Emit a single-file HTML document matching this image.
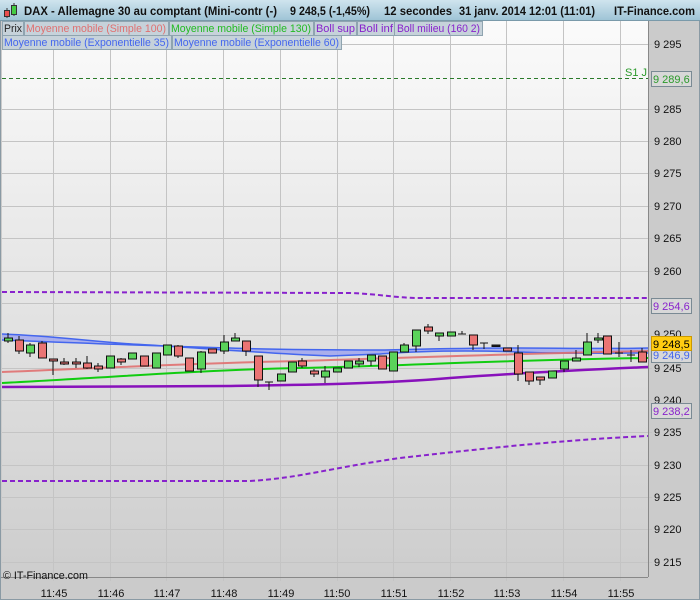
<!DOCTYPE html><html><head><style>body{margin:0;width:700px;height:600px;overflow:hidden;font-family:"Liberation Sans",sans-serif}</style></head><body>
<svg width="700" height="600" xmlns="http://www.w3.org/2000/svg" font-family="Liberation Sans, sans-serif">
<defs>
<linearGradient id="bg" x1="0" y1="0" x2="0" y2="1"><stop offset="0" stop-color="#fbfbfb"/><stop offset="1" stop-color="#cdcdcd"/></linearGradient>
<linearGradient id="hd" x1="0" y1="0" x2="0" y2="1"><stop offset="0" stop-color="#cfe4ee"/><stop offset="1" stop-color="#9fc4d6"/></linearGradient>
</defs>
<rect width="700" height="600" fill="#cbcbcb"/>
<rect x="2" y="20" width="646" height="557" fill="url(#bg)"/>
<g stroke="#c4c4c4" stroke-width="1">
<line x1="53.5" y1="20" x2="53.5" y2="581"/><line x1="110.5" y1="20" x2="110.5" y2="581"/><line x1="166.5" y1="20" x2="166.5" y2="581"/><line x1="223.5" y1="20" x2="223.5" y2="581"/><line x1="280.5" y1="20" x2="280.5" y2="581"/><line x1="337.5" y1="20" x2="337.5" y2="581"/><line x1="393.5" y1="20" x2="393.5" y2="581"/><line x1="450.5" y1="20" x2="450.5" y2="581"/><line x1="506.5" y1="20" x2="506.5" y2="581"/><line x1="563.5" y1="20" x2="563.5" y2="581"/><line x1="620.5" y1="20" x2="620.5" y2="581"/>
<line x1="2" y1="44.5" x2="652" y2="44.5"/><line x1="2" y1="109.5" x2="652" y2="109.5"/><line x1="2" y1="141.5" x2="652" y2="141.5"/><line x1="2" y1="173.5" x2="652" y2="173.5"/><line x1="2" y1="206.5" x2="652" y2="206.5"/><line x1="2" y1="238.5" x2="652" y2="238.5"/><line x1="2" y1="271.5" x2="652" y2="271.5"/><line x1="2" y1="303.5" x2="652" y2="303.5"/><line x1="2" y1="335.5" x2="652" y2="335.5"/><line x1="2" y1="368.5" x2="652" y2="368.5"/><line x1="2" y1="400.5" x2="652" y2="400.5"/><line x1="2" y1="432.5" x2="652" y2="432.5"/><line x1="2" y1="465.5" x2="652" y2="465.5"/><line x1="2" y1="497.5" x2="652" y2="497.5"/><line x1="2" y1="529.5" x2="652" y2="529.5"/><line x1="2" y1="562.5" x2="652" y2="562.5"/>
</g>
<line x1="2" y1="78.5" x2="648" y2="78.5" stroke="#2a7a2a" stroke-dasharray="4,3"/>
<text x="625" y="76" font-size="11" fill="#2a9a2a">S1 J</text>
<path d="M2,334 C60,336 100,343 150,345 C200,348 260,353 330,356 L380,354 C420,351 460,350 520,352 C560,354 600,353 648,353 L648,348 C600,349 560,348 520,348 C470,348 430,349 380,350 C330,350 280,350 230,348 C150,346 80,343 2,340 Z" fill="#a0a6ee" opacity="0.85"/>
<path d="M2,334 C60,336 100,343 150,345 C200,348 260,353 330,356 L380,354 C420,351 460,350 520,352 C560,354 600,353 648,353" fill="none" stroke="#4466ee" stroke-width="1.5"/>
<path d="M2,340 C80,343 150,346 230,348 C280,350 330,350 380,350 C430,349 470,348 520,348 C560,348 600,349 648,348" fill="none" stroke="#4466ee" stroke-width="1.5"/>
<path d="M2,372 C100,368 200,363 300,361 C400,358 500,354 648,351" fill="none" stroke="#e07070" stroke-width="2" opacity="0.9"/>
<path d="M2,383 C100,378 200,370 300,368 C400,366 500,360 648,358" fill="none" stroke="#11cc11" stroke-width="2"/>
<path d="M2,387 L230,386 C300,385 380,384 450,378 C520,373 580,370 648,367" fill="none" stroke="#8811bb" stroke-width="2.5"/>
<path d="M2,292 L350,293 C380,294 395,298 420,298 L648,298" fill="none" stroke="#8822cc" stroke-width="2" stroke-dasharray="5,3"/>
<path d="M2,481 L250,481 C300,478 330,468 400,458 C480,449 560,440 648,436" fill="none" stroke="#8822cc" stroke-width="2" stroke-dasharray="5,3"/>
<g stroke="#111" stroke-width="1">
<line x1="8" y1="333" x2="8" y2="343"/><rect x="4.5" y="338" width="8" height="3" fill="#5ad35a"/>
<line x1="19" y1="336" x2="19" y2="354"/><rect x="15.5" y="340" width="8" height="11" fill="#ea7474"/>
<line x1="30" y1="343" x2="30" y2="357"/><rect x="26.5" y="345" width="8" height="8" fill="#5ad35a"/>
<line x1="42" y1="341" x2="42" y2="358"/><rect x="38.5" y="343" width="8" height="15" fill="#ea7474"/>
<line x1="53" y1="359" x2="53" y2="375"/><rect x="49.5" y="359" width="8" height="2" fill="#ea7474"/>
<line x1="64" y1="358" x2="64" y2="365"/><rect x="60.5" y="362" width="8" height="2" fill="#ea7474"/>
<line x1="76" y1="358" x2="76" y2="368"/><rect x="72.5" y="362" width="8" height="2" fill="#ea7474"/>
<line x1="87" y1="356" x2="87" y2="369"/><rect x="83.5" y="363" width="8" height="5" fill="#ea7474"/>
<line x1="98" y1="363" x2="98" y2="372"/><rect x="94.5" y="366" width="8" height="3" fill="#ea7474"/>
<rect x="106.5" y="356" width="8" height="12" fill="#5ad35a"/>
<line x1="121" y1="358" x2="121" y2="365"/><rect x="117.5" y="359" width="8" height="3" fill="#ea7474"/>
<rect x="128.5" y="353" width="8" height="6" fill="#5ad35a"/>
<rect x="140.5" y="356" width="8" height="10" fill="#ea7474"/>
<rect x="152.5" y="353" width="8" height="15" fill="#5ad35a"/>
<rect x="163.5" y="345" width="8" height="10" fill="#5ad35a"/>
<line x1="178" y1="345" x2="178" y2="358"/><rect x="174.5" y="346" width="8" height="10" fill="#ea7474"/>
<rect x="185.5" y="358" width="8" height="13" fill="#ea7474"/>
<line x1="201" y1="351" x2="201" y2="373"/><rect x="197.5" y="352" width="8" height="17" fill="#5ad35a"/>
<rect x="208.5" y="349" width="8" height="4" fill="#ea7474"/>
<line x1="224" y1="335" x2="224" y2="354"/><rect x="220.5" y="342" width="8" height="9" fill="#5ad35a"/>
<line x1="235" y1="333" x2="235" y2="341"/><rect x="231.5" y="338" width="8" height="3" fill="#5ad35a"/>
<line x1="246" y1="341" x2="246" y2="356"/><rect x="242.5" y="341" width="8" height="10" fill="#ea7474"/>
<line x1="258" y1="356" x2="258" y2="387"/><rect x="254.5" y="356" width="8" height="24" fill="#ea7474"/>
<line x1="269" y1="382" x2="269" y2="390"/><line x1="265" y1="382" x2="273" y2="382"/>
<rect x="277.5" y="374" width="8" height="7" fill="#5ad35a"/>
<rect x="288.5" y="362" width="8" height="10" fill="#5ad35a"/>
<line x1="302" y1="358" x2="302" y2="368"/><rect x="298.5" y="361" width="8" height="5" fill="#ea7474"/>
<line x1="314" y1="369" x2="314" y2="377"/><rect x="310.5" y="371" width="8" height="3" fill="#ea7474"/>
<line x1="325" y1="366" x2="325" y2="383"/><rect x="321.5" y="371" width="8" height="6" fill="#5ad35a"/>
<rect x="333.5" y="368" width="8" height="4" fill="#5ad35a"/>
<rect x="344.5" y="361" width="8" height="7" fill="#5ad35a"/>
<line x1="359" y1="358" x2="359" y2="367"/><rect x="355.5" y="361" width="8" height="3" fill="#5ad35a"/>
<line x1="371" y1="355" x2="371" y2="366"/><rect x="367.5" y="355" width="8" height="6" fill="#5ad35a"/>
<rect x="378.5" y="356" width="8" height="13" fill="#ea7474"/>
<rect x="389.5" y="352" width="8" height="19" fill="#5ad35a"/>
<line x1="404" y1="343" x2="404" y2="352"/><rect x="400.5" y="345" width="8" height="7" fill="#5ad35a"/>
<line x1="416" y1="330" x2="416" y2="352"/><rect x="412.5" y="330" width="8" height="16" fill="#5ad35a"/>
<line x1="428" y1="324" x2="428" y2="334"/><rect x="424.5" y="327" width="8" height="4" fill="#ea7474"/>
<line x1="439" y1="333" x2="439" y2="341"/><rect x="435.5" y="333" width="8" height="3" fill="#5ad35a"/>
<rect x="447.5" y="332" width="8" height="4" fill="#5ad35a"/>
<line x1="462" y1="331" x2="462" y2="334"/><line x1="458" y1="334" x2="466" y2="334"/>
<line x1="473" y1="335" x2="473" y2="350"/><rect x="469.5" y="335" width="8" height="10" fill="#ea7474"/>
<line x1="484" y1="343" x2="484" y2="349"/><line x1="480" y1="343" x2="488" y2="343"/>
<rect x="492" y="345" width="8" height="1.5" fill="#222"/>
<rect x="503.5" y="348" width="8" height="3" fill="#ea7474"/>
<line x1="518" y1="345" x2="518" y2="381"/><rect x="514.5" y="353" width="8" height="21" fill="#ea7474"/>
<line x1="529" y1="372" x2="529" y2="385"/><rect x="525.5" y="372" width="8" height="9" fill="#ea7474"/>
<line x1="540" y1="377" x2="540" y2="385"/><rect x="536.5" y="377" width="8" height="3" fill="#ea7474"/>
<rect x="548.5" y="371" width="8" height="7" fill="#5ad35a"/>
<line x1="564" y1="361" x2="564" y2="372"/><rect x="560.5" y="361" width="8" height="8" fill="#5ad35a"/>
<line x1="576" y1="350" x2="576" y2="361"/><rect x="572.5" y="358" width="8" height="3" fill="#5ad35a"/>
<line x1="587" y1="333" x2="587" y2="355"/><rect x="583.5" y="342" width="8" height="13" fill="#5ad35a"/>
<line x1="598" y1="333" x2="598" y2="343"/><rect x="594.5" y="338" width="8" height="2" fill="#5ad35a"/>
<rect x="603.5" y="336" width="8" height="18" fill="#ea7474"/>
<line x1="619" y1="342" x2="619" y2="357"/><line x1="615" y1="353" x2="623" y2="353"/>
<line x1="631" y1="350" x2="631" y2="362"/><line x1="627" y1="355" x2="635" y2="355"/>
<line x1="642" y1="348" x2="642" y2="362"/><rect x="638.5" y="352" width="8" height="10" fill="#ea7474"/>
</g>
<line x1="648.5" y1="20" x2="648.5" y2="577" stroke="#888"/>
<line x1="0" y1="577.5" x2="648" y2="577.5" stroke="#888"/>
<rect x="0.5" y="0.5" width="699" height="599" fill="none" stroke="#8a9aa4"/>
<g font-size="11" fill="#111">
<text x="654" y="48">9 295</text><text x="654" y="113">9 285</text><text x="654" y="145">9 280</text><text x="654" y="177">9 275</text><text x="654" y="210">9 270</text><text x="654" y="242">9 265</text><text x="654" y="275">9 260</text><text x="654" y="338">9 250</text><text x="654" y="372">9 245</text><text x="654" y="404">9 240</text><text x="654" y="436">9 235</text><text x="654" y="469">9 230</text><text x="654" y="501">9 225</text><text x="654" y="533">9 220</text><text x="654" y="566">9 215</text>
</g>
<rect x="651.5" y="71.5" width="40" height="15" fill="#d8d8d8" stroke="#7a8a94"/><text x="653" y="83" font-size="11" fill="#2a9a2a">9 289,6</text>
<rect x="651.5" y="298.5" width="40" height="15" fill="#d8d8d8" stroke="#7a8a94"/><text x="653" y="310" font-size="11" fill="#8822cc">9 254,6</text>
<rect x="651.5" y="347.5" width="40" height="15" fill="#d8d8d8" stroke="#7a8a94"/><text x="653" y="359" font-size="11" fill="#4466ee">9 246,9</text>
<rect x="651.5" y="336.5" width="40" height="14" fill="#ffcc11" stroke="#cc9900"/><text x="653" y="348" font-size="11" fill="#000">9 248,5</text>
<rect x="651.5" y="403.5" width="40" height="15" fill="#d8d8d8" stroke="#7a8a94"/><text x="653" y="415" font-size="11" fill="#8822cc">9 238,2</text>
<text x="3" y="579" font-size="11" fill="#111" textLength="85" lengthAdjust="spacingAndGlyphs">© IT-Finance.com</text>
<g font-size="11" fill="#111" text-anchor="middle">
<text x="54" y="597">11:45</text><text x="111" y="597">11:46</text><text x="167" y="597">11:47</text><text x="224" y="597">11:48</text><text x="281" y="597">11:49</text><text x="337" y="597">11:50</text><text x="394" y="597">11:51</text><text x="451" y="597">11:52</text><text x="507" y="597">11:53</text><text x="564" y="597">11:54</text><text x="621" y="597">11:55</text>
</g>
<rect x="0" y="0" width="700" height="20" fill="url(#hd)"/>
<line x1="0" y1="20.5" x2="700" y2="20.5" stroke="#7a9aaa"/>
<line x1="7" y1="8" x2="7" y2="18" stroke="#333"/><rect x="4.5" y="10.5" width="5" height="6" fill="#ea5050" stroke="#333"/>
<line x1="14" y1="3" x2="14" y2="16" stroke="#333"/><rect x="11.5" y="5.5" width="5" height="9" fill="#44cc44" stroke="#333"/>
<g font-size="12" font-weight="bold" fill="#111">
<text x="24" y="15" textLength="253" lengthAdjust="spacingAndGlyphs">DAX - Allemagne 30 au comptant (Mini-contr (-)</text>
<text x="290" y="15" textLength="80" lengthAdjust="spacingAndGlyphs">9 248,5 (-1,45%)</text>
<text x="384" y="15" textLength="68" lengthAdjust="spacingAndGlyphs">12 secondes</text>
<text x="459" y="15" textLength="136" lengthAdjust="spacingAndGlyphs">31 janv. 2014 12:01 (11:01)</text>
<text x="614" y="15" textLength="81" lengthAdjust="spacingAndGlyphs">IT-Finance.com</text>
</g>
<g font-size="11">
<rect x="2.5" y="21.5" width="21" height="14" fill="#c6d2da" stroke="#8fa4b0"/><text x="4" y="32" fill="#222" textLength="18" lengthAdjust="spacingAndGlyphs">Prix</text>
<rect x="24.5" y="21.5" width="144" height="14" fill="#c6d2da" stroke="#8fa4b0"/><text x="26" y="32" fill="#e07070" textLength="140" lengthAdjust="spacingAndGlyphs">Moyenne mobile (Simple 100)</text>
<rect x="169.5" y="21.5" width="144" height="14" fill="#c6d2da" stroke="#8fa4b0"/><text x="171" y="32" fill="#22bb22" textLength="140" lengthAdjust="spacingAndGlyphs">Moyenne mobile (Simple 130)</text>
<rect x="314.5" y="21.5" width="42" height="14" fill="#c6d2da" stroke="#8fa4b0"/><text x="316" y="32" fill="#8822cc" textLength="39" lengthAdjust="spacingAndGlyphs">Boll sup</text>
<rect x="357.5" y="21.5" width="37" height="14" fill="#c6d2da" stroke="#8fa4b0"/><text x="359" y="32" fill="#8822cc" textLength="34" lengthAdjust="spacingAndGlyphs">Boll inf</text>
<rect x="394.5" y="21.5" width="88" height="14" fill="#c6d2da" stroke="#8fa4b0"/><text x="397" y="32" fill="#8822cc" textLength="83" lengthAdjust="spacingAndGlyphs">Boll milieu (160 2)</text>
<rect x="2.5" y="35.5" width="169" height="14" fill="#c6d2da" stroke="#8fa4b0"/><text x="4" y="46" fill="#4466ee" textLength="165" lengthAdjust="spacingAndGlyphs">Moyenne mobile (Exponentielle 35)</text>
<rect x="172.5" y="35.5" width="169" height="14" fill="#c6d2da" stroke="#8fa4b0"/><text x="174" y="46" fill="#4466ee" textLength="165" lengthAdjust="spacingAndGlyphs">Moyenne mobile (Exponentielle 60)</text>
</g>
</svg>
</body></html>
